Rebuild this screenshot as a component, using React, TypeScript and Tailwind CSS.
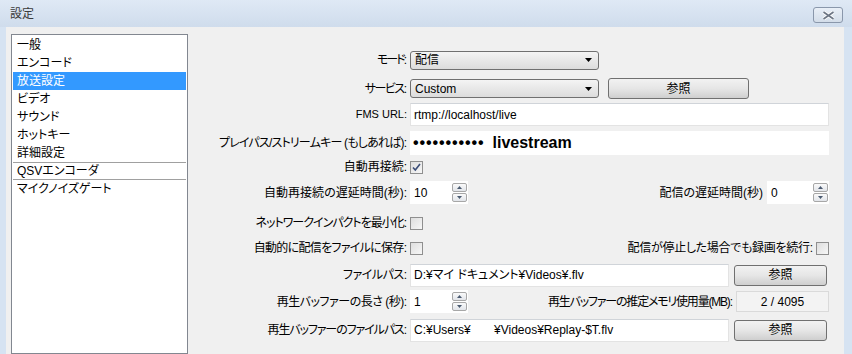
import React from "react";

const sideItems = ["一般", "エンコード", "放送設定", "ビデオ", "サウンド", "ホットキー", "詳細設定"];

function Combo({ value, w }: { value: string; w: string }) {
  return (
    <div
      className={`${w} h-[19px] flex items-center justify-between rounded-[3px] border border-[#707070] bg-gradient-to-b from-[#f4f4f4] to-[#dcdcdc] pl-[4px] pr-[6px]`}
    >
      <span>{value}</span>
      <svg width="7" height="4" viewBox="0 0 7 4">
        <path d="M0 0h7L3.5 4z" fill="#000" />
      </svg>
    </div>
  );
}

function Btn({ w }: { w: string }) {
  return (
    <div
      className={`${w} h-[21px] flex items-center justify-center rounded-[3px] border border-[#707070] bg-gradient-to-b from-[#f2f2f2] via-[#e6e6e6] to-[#cfcfcf]`}
    >
      参照
    </div>
  );
}

function TextBox({ children, w }: { children: React.ReactNode; w: string }) {
  return (
    <div
      className={`${w} h-[23px] flex items-center bg-white border border-[#e3e3e3] border-t-[#d0d4d9] pl-[3px]`}
    >
      {children}
    </div>
  );
}

function Spin({ value, w }: { value: string; w: string }) {
  return (
    <div className={`${w} h-[23px] flex items-center bg-white pl-[4px]`}>
      <span className="flex-1">{value}</span>
      <div className="flex flex-col gap-[1px] pr-[1px]">
        {[0, 1].map((i) => (
          <div
            key={i}
            className="w-[15px] h-[9px] flex items-center justify-center rounded-[2px] border border-[#a7a7a7] bg-gradient-to-b from-[#fafafa] to-[#e2e5ea]"
          >
            <svg width="5" height="3" viewBox="0 0 5 3">
              <path d={i === 0 ? "M0 3h5L2.5 0z" : "M0 0h5L2.5 3z"} fill="#4a5a70" />
            </svg>
          </div>
        ))}
      </div>
    </div>
  );
}

function Check({ checked }: { checked?: boolean }) {
  return (
    <div className="w-[13px] h-[13px] flex items-center justify-center border border-[#8f8f8f] bg-gradient-to-br from-[#dedede] to-[#f7f7f7]">
      {checked && (
        <svg width="9" height="9" viewBox="0 0 9 9">
          <path d="M1 4.5l2.3 2.5L8 1" stroke="#3b4d78" strokeWidth="1.6" fill="none" />
        </svg>
      )}
    </div>
  );
}

// tr: 文字詰め (letter-spacing がマイナスの分だけ右に padding を入れて末尾を揃える)
function Row({
  h,
  label,
  tr = "",
  children,
}: {
  h: string;
  label: string;
  tr?: string;
  children: React.ReactNode;
}) {
  return (
    <div className={`${h} flex items-center`}>
      <div className={`w-[219px] text-right whitespace-nowrap ${tr}`}>{label}</div>
      <div className="ml-[3px] flex-1 flex items-center">{children}</div>
    </div>
  );
}

export default function App() {
  return (
    <div className="w-[852px] h-[354px] flex flex-col bg-[#d6e3f2] overflow-hidden text-[12px] text-black font-['Liberation_Sans','Noto_Sans_CJK_JP',sans-serif] [font-feature-settings:'palt']">
      {/* タイトルバー */}
      <div className="h-[27px] shrink-0 flex items-start justify-between bg-gradient-to-b from-[#dfe9f5] to-[#cfdcec] pl-[10px] pr-[9px]">
        <span className="mt-[5px] text-[#3a3a3a]">設定</span>
        <div className="mt-[7px] w-[30px] h-[16px] flex items-center justify-center rounded-[3px] border border-[#8a97ab] bg-gradient-to-b from-[#e9eff7] to-[#d3dde9]">
          <svg width="13" height="9" viewBox="0 0 13 9">
            <path d="M1.5 1l10 7M11.5 1l-10 7" stroke="#ffffff" strokeWidth="3.4" />
            <path d="M1.5 1l10 7M11.5 1l-10 7" stroke="#6d7685" strokeWidth="1.7" />
          </svg>
        </div>
      </div>

      <div className="flex-1 flex ml-[6px] mr-[8px] bg-[#f0f0f0]">
        {/* サイドリスト */}
        <div className="mt-[7px] ml-[5px] w-[177px] border border-[#828790] bg-white pt-[1px] px-[1px]">
          {sideItems.map((s) => (
            <div
              key={s}
              className={`h-[18px] flex items-center pl-[4px] ${s === "放送設定" ? "bg-[#3399ff] text-white" : ""}`}
            >
              {s}
            </div>
          ))}
          <div className="h-[18px] flex items-center pl-[4px] border-y border-[#a0a0a0]">QSVエンコーダ</div>
          <div className="h-[18px] flex items-center pl-[4px]">マイクノイズゲート</div>
        </div>

        {/* 放送設定フォーム */}
        <div className="flex-1 flex flex-col pt-[19px] pr-[15px]">
          <Row h="h-[28px]" label="モード:" tr="tracking-[-2px] pr-[2px]">
            <Combo value="配信" w="w-[189px]" />
          </Row>
          <Row h="h-[29px]" label="サービス:" tr="tracking-[-1.5px] pr-[1.5px]">
            <Combo value="Custom" w="w-[189px]" />
            <div className="ml-[9px]">
              <Btn w="w-[141px]" />
            </div>
          </Row>
          <Row h="h-[23px]" label="FMS URL:" tr="text-[11px]">
            <TextBox w="flex-1">rtmp://localhost/live</TextBox>
          </Row>
          <Row h="h-[34px]" label="プレイパス/ストリームキー (もしあれば):" tr="tracking-[-0.8px] pr-[0.8px]">
            <div className="flex-1 h-[24px] flex items-center bg-white pl-[3px] text-[16px] font-bold">
              <span className="tracking-[0.9px]">•••••••••••</span>
              <span className="ml-[8px]">livestream</span>
            </div>
          </Row>
          <Row h="h-[14px]" label="自動再接続:">
            <Check checked />
          </Row>
          <Row h="h-[37px]" label="自動再接続の遅延時間(秒):">
            <Spin value="10" w="w-[58px]" />
            <div className="flex-1 text-right whitespace-nowrap">配信の遅延時間(秒)</div>
            <div className="ml-[4px]">
              <Spin value="0" w="w-[62px]" />
            </div>
          </Row>
          <Row h="h-[24px]" label="ネットワークインパクトを最小化:" tr="tracking-[-1px] pr-[1px]">
            <Check />
          </Row>
          <Row h="h-[26px]" label="自動的に配信をファイルに保存:" tr="tracking-[-0.7px] pr-[0.7px]">
            <Check />
            <div className="flex-1 text-right whitespace-nowrap tracking-[-0.3px] pr-[0.3px]">
              配信が停止した場合でも録画を続行:
            </div>
            <div className="ml-[3px]">
              <Check />
            </div>
          </Row>
          <Row h="h-[28px]" label="ファイルパス:" tr="tracking-[-0.5px] pr-[0.5px]">
            <TextBox w="w-[319px]">D:¥マイ ドキュメント¥Videos¥.flv</TextBox>
            <div className="ml-[5px]">
              <Btn w="w-[93px]" />
            </div>
          </Row>
          <Row h="h-[25px]" label="再生バッファーの長さ (秒):" tr="tracking-[-0.5px] pr-[0.5px]">
            <Spin value="1" w="w-[58px]" />
            <div className="flex-1 text-right whitespace-nowrap tracking-[-1.2px] pr-[1.2px]">
              再生バッファーの推定メモリ使用量(MB):
            </div>
            <div className="ml-[3px] w-[93px] h-[21px] flex items-center justify-center border border-[#dadada] bg-[#f3f3f3]">
              2 / 4095
            </div>
          </Row>
          <Row h="h-[32px]" label="再生バッファーのファイルパス:" tr="tracking-[-1.1px] pr-[1.1px]">
            <TextBox w="w-[319px]">C:¥Users¥&nbsp;&nbsp;&nbsp;&nbsp;&nbsp;&nbsp;&nbsp;¥Videos¥Replay-$T.flv</TextBox>
            <div className="ml-[5px]">
              <Btn w="w-[93px]" />
            </div>
          </Row>
        </div>
      </div>
    </div>
  );
}
